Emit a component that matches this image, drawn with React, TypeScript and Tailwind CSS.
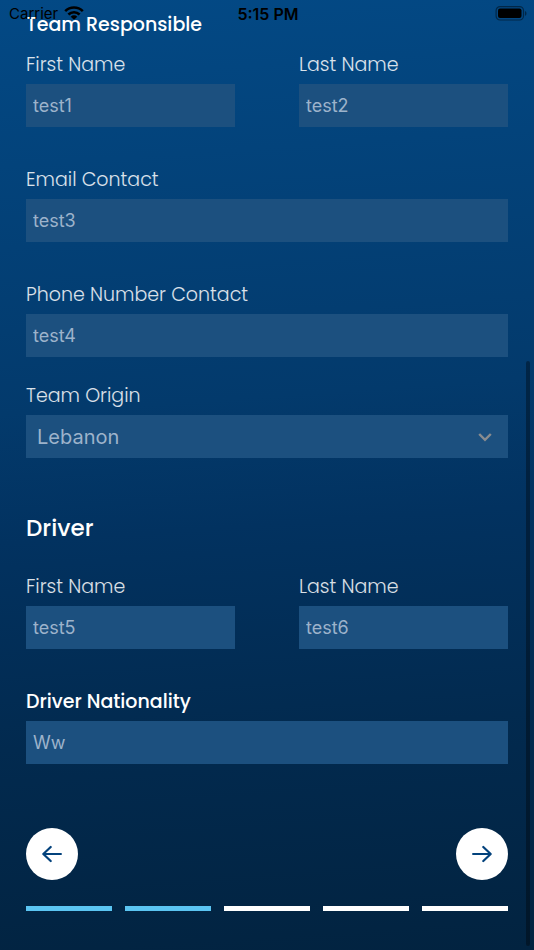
import React, { useId, useState } from 'react';

type FieldProps = {
  label: string;
  initial: string;
  bold?: boolean;
};

function Field({ label, initial, bold }: FieldProps) {
  const id = useId();
  const [value, setValue] = useState(initial);

  return (
    <div className="flex min-w-0 flex-1 flex-col gap-[5px]">
      <label
        htmlFor={id}
        className={
          bold
            ? 'text-[19px] leading-7 font-medium text-white'
            : 'text-[19px] leading-7 font-light text-white/85'
        }
      >
        {label}
      </label>
      <input
        id={id}
        type="text"
        value={value}
        onChange={(e) => setValue(e.target.value)}
        className="h-[43px] w-full bg-[#1c507f] px-[7px] font-['Inter',sans-serif] text-lg text-[#9db3cb] outline-none"
      />
    </div>
  );
}

function StatusBar() {
  return (
    <div className="absolute inset-x-0 top-0 grid h-7 grid-cols-3 items-center pr-[7px] pl-[9px] font-['Inter',sans-serif] text-[15px] text-black">
      <div className="flex items-center gap-[6px]">
        <span>Carrier</span>
        <svg className="mb-[2px] h-[14px] w-5" viewBox="0 0 20 14" fill="none" stroke="currentColor" aria-hidden="true">
          <path d="M1.2 5.1a12.6 12.6 0 0 1 17.6 0" strokeWidth="2.6" />
          <path d="M4.4 8.5a8 8 0 0 1 11.2 0" strokeWidth="2.6" />
          <path d="M10 13.8 6.7 10.7a4.6 4.6 0 0 1 6.6 0z" fill="currentColor" stroke="none" />
        </svg>
      </div>
      <div className="text-center text-base font-semibold">5:15 PM</div>
      <svg className="mb-[2px] h-[15px] w-8 justify-self-end" viewBox="0 0 32 15" aria-hidden="true">
        <rect x="1.1" y="0.6" width="27.4" height="13.4" rx="4" fill="none" stroke="#000" strokeOpacity="0.45" strokeWidth="1.2" />
        <rect x="3" y="2.5" width="23.5" height="9.6" rx="2" fill="#000" />
        <path d="M30 5v4.8c2-.8 2-4 0-4.8z" fill="#000" fillOpacity="0.45" />
      </svg>
    </div>
  );
}

function Arrow({ flip }: { flip?: boolean }) {
  return (
    <svg
      className={flip ? 'h-5 w-5 rotate-180' : 'h-5 w-5'}
      viewBox="0 0 20 20"
      fill="none"
      stroke="#03427c"
      strokeWidth="2.2"
      strokeLinecap="round"
      strokeLinejoin="round"
      aria-hidden="true"
    >
      <path d="M1.1 10h17.6M11.3 3l7.4 7-7.4 7" />
    </svg>
  );
}

const steps = [true, true, false, false, false];

export default function App() {
  const [country, setCountry] = useState('Lebanon');

  return (
    <div className="relative min-h-screen bg-linear-[176deg,#034985_0%,#033a6c_42%,#023260_55%,#022a4f_76%,#022340_100%] font-['Poppins','Inter',sans-serif]">
      <form className="flex flex-col px-[26px] pt-[11px] pb-[39px]" onSubmit={(e) => e.preventDefault()}>
        <h2 className="mb-3 text-[19px] leading-7 font-medium text-white">Team Responsible</h2>

        <div className="flex flex-col gap-[39px]">
          <div className="flex gap-16">
            <Field label="First Name" initial="test1" />
            <Field label="Last Name" initial="test2" />
          </div>
          <Field label="Email Contact" initial="test3" />
          <Field label="Phone Number Contact" initial="test4" />
        </div>

        <div className="mt-[25px] flex flex-col gap-[5px]">
          <label htmlFor="origin" className="text-[19px] leading-7 font-light text-white/85">
            Team Origin
          </label>
          <div className="relative">
            <select
              id="origin"
              value={country}
              onChange={(e) => setCountry(e.target.value)}
              className="block h-[43px] w-full appearance-none bg-[#1c507f] px-[11px] font-['Inter',sans-serif] text-xl text-[#9db3cb] outline-none"
            >
              <option>Lebanon</option>
            </select>
            <svg
              className="pointer-events-none absolute top-1/2 right-4 h-[14px] w-[14px] -translate-y-1/2"
              viewBox="0 0 14 14"
              fill="none"
              stroke="#8a8c8f"
              strokeWidth="2.4"
              aria-hidden="true"
            >
              <path d="M1.2 4 7 9.8 12.8 4" />
            </svg>
          </div>
        </div>

        <h2 className="mt-[52px] mb-[27px] text-[23px] leading-9 font-medium text-white">Driver</h2>

        <div className="flex flex-col gap-[39px]">
          <div className="flex gap-16">
            <Field label="First Name" initial="test5" />
            <Field label="Last Name" initial="test6" />
          </div>
          <Field label="Driver Nationality" initial="Ww" bold />
        </div>

        <div className="mt-16 flex justify-between">
          <button type="button" aria-label="Back" className="flex h-[52px] w-[52px] items-center justify-center rounded-full bg-white">
            <Arrow flip />
          </button>
          <button type="submit" aria-label="Next" className="flex h-[52px] w-[52px] items-center justify-center rounded-full bg-white">
            <Arrow />
          </button>
        </div>

        <div className="mt-[26px] flex gap-[13px]">
          {steps.map((done, i) => (
            <div key={i} className={done ? 'h-[5px] flex-1 bg-[#5bc5f2]' : 'h-[5px] flex-1 bg-white'} />
          ))}
        </div>
      </form>

      <StatusBar />

      {/* Scroll indicator */}
      <div className="absolute right-1 bottom-1 h-[585px] w-1 rounded-full bg-black/35" />
    </div>
  );
}
